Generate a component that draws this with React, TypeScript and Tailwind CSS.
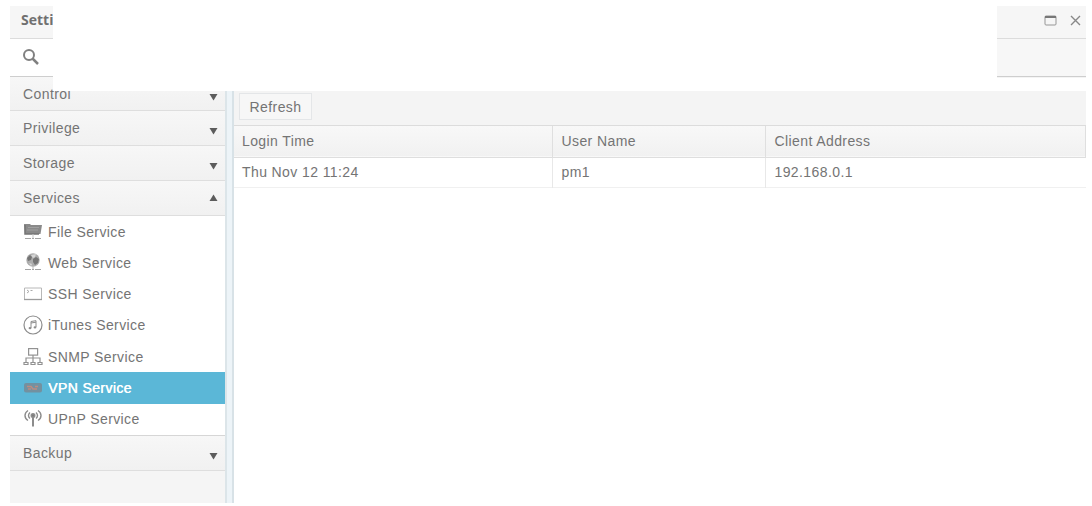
import type { ReactNode } from "react";
import clsx from "clsx";

type Service = {
  name: string;
  icon: ReactNode;
  active?: boolean;
};

const services: Service[] = [
  { name: "File Service", icon: <FileIcon /> },
  { name: "Web Service", icon: <WebIcon /> },
  { name: "SSH Service", icon: <SshIcon /> },
  { name: "iTunes Service", icon: <ItunesIcon /> },
  { name: "SNMP Service", icon: <SnmpIcon /> },
  { name: "VPN Service", icon: <VpnIcon />, active: true },
  { name: "UPnP Service", icon: <UpnpIcon /> },
];

const sessions = [{ time: "Thu Nov 12 11:24", user: "pm1", address: "192.168.0.1" }];

function FileIcon() {
  return (
    <svg width="20" height="20" viewBox="0 0 20 20">
      <path d="M1 2h6l1 1h11l-1.500 9H2z" fill="#8a8a8a" />
      <path d="M5 5.500h11M4 8h11" stroke="#a0a0a0" strokeWidth="1" />
      <path d="M2 3v9h14" stroke="#747474" strokeWidth="1.500" fill="none" />
      <path d="M10 12v4" stroke="#c8c8c8" />
      <path d="M2 16.500h16" stroke="#a4a4a4" strokeWidth="1.200" strokeDasharray="6 1 2 1" />
    </svg>
  );
}

function WebIcon() {
  return (
    <svg width="20" height="20" viewBox="0 0 20 20">
      <circle cx="10" cy="7" r="6.700" fill="#acacac" />
      <path d="M4 5l3-3 2 2-1 3-3 1zM10 6l3-2 3 2-1 4-3 2-2-3z" fill="#747474" />
      <path d="M8 2l5-1-1 3-2 1zM6 10l3 1-1 2z" fill="#d5d5d5" />
      <path d="M10 13v3" stroke="#bbb" />
      <path d="M2 16.500h16" stroke="#a4a4a4" strokeWidth="1.200" strokeDasharray="6 1 2 1" />
    </svg>
  );
}

function SshIcon() {
  return (
    <svg width="20" height="20" viewBox="0 0 20 20" fill="none">
      <path d="M1.500 15V4h17v11" stroke="#b8b8b8" />
      <path d="M1 15.500h18" stroke="#9c9c9c" strokeWidth="1.300" />
      <path d="M4 6l2 1.500L4 9M7.500 6.500h2" stroke="#aaa" />
    </svg>
  );
}

function ItunesIcon() {
  return (
    <svg width="20" height="20" viewBox="0 0 20 20" fill="none">
      <circle cx="10" cy="10" r="9" stroke="#8c8c8c" strokeWidth="1.200" />
      <path d="M8 13V6.500l5-.8V12M8 8l5-.8" stroke="#8c8c8c" />
      <ellipse cx="7" cy="13.200" rx="1.400" ry="1.100" fill="#8c8c8c" />
      <ellipse cx="12" cy="12.400" rx="1.400" ry="1.100" fill="#8c8c8c" />
    </svg>
  );
}

function SnmpIcon() {
  return (
    <svg width="20" height="20" viewBox="0 0 20 20" fill="none" stroke="#929292" strokeWidth="1.200">
      <rect x="5.600" y="1.600" width="9" height="6.500" />
      <path d="M10 8v7M3 15v-4h14v4" />
      <path d="M1 15.500h4v2H1zM8 15.500h4v2H8zM15 15.500h4v2h-4z" />
    </svg>
  );
}

function VpnIcon() {
  return (
    <svg width="20" height="20" viewBox="0 0 20 20">
      <rect x="1" y="5" width="18" height="9.500" rx="2" fill="#7391a0" />
      <path d="M4 8.500h4l2 2.500h4M5 11h3M12 8.500h3" stroke="#bd8c80" strokeWidth="1.500" fill="none" />
    </svg>
  );
}

function UpnpIcon() {
  return (
    <svg width="20" height="20" viewBox="0 0 20 20" fill="none" stroke="#8c8c8c" strokeWidth="1.400">
      <path d="M5 1.500c-4 2.500-4 7.500 0 10M15 1.500c4 2.500 4 7.500 0 10" />
      <path d="M7 3.500c-2 1.800-2 4.500 0 6M13 3.500c2 1.800 2 4.500 0 6" />
      <circle cx="10" cy="6.500" r="1.800" fill="#7c7c7c" />
      <path d="M10 8v9.500" strokeWidth="2" />
    </svg>
  );
}

function Section({ title, open = false, className }: { title: string; open?: boolean; className?: string }) {
  return (
    <div
      className={clsx(
        "flex shrink-0 items-center justify-between border-b border-[#dedede] bg-linear-to-b from-[#f7f7f7] to-[#f1f1f1] pr-[7px] pl-[13px]",
        className ?? "h-[35px]",
      )}
    >
      <span>{title}</span>
      <svg width="9" height="8" viewBox="0 0 9 8" className={open ? "rotate-180" : "mt-1.5"}>
        <path d="M.5 1h8L4.500 7.500z" fill="#5c5c5c" />
      </svg>
    </div>
  );
}

export default function App() {
  return (
    <div className="relative h-[506px] w-[1092px] overflow-hidden bg-white pt-1.5 pl-2.5 font-['Liberation_Sans',Arial,sans-serif] text-[14px] leading-5 tracking-[0.4px] text-[#747474]">
      <div className="flex h-[497px] w-[1076px] flex-col">
        {/* title bar */}
        <div className="flex h-[33px] shrink-0 items-center justify-between border-b border-[#dcdcdc] bg-[#f6f6f6] pr-[5px] pl-[11px]">
          <span className="pb-1 font-['Open_Sans','Noto_Sans',sans-serif] font-bold tracking-normal text-[#707070]">
            Settings
          </span>
          <div className="flex items-center gap-[13px] pb-1">
            <svg width="13" height="11" viewBox="0 0 13 11" fill="none">
              <rect x="1" y="1" width="11" height="9" rx="1" stroke="#969696" />
              <path d="M1 2h11" stroke="#777" strokeWidth="2" />
            </svg>
            <svg width="11" height="11" viewBox="0 0 11 11">
              <path d="M1 1l9 9M10 1l-9 9" stroke="#888" strokeWidth="1.400" />
            </svg>
          </div>
        </div>

        {/* search bar */}
        <div className="flex h-[38px] shrink-0 justify-between border-b border-[#cecece]">
          <svg width="18" height="18" viewBox="0 0 18 18" fill="none" className="mt-[9px] ml-3">
            <circle cx="7" cy="7" r="5" stroke="#808080" strokeWidth="2" />
            <path d="M10.500 10.500l5.500 5.500" stroke="#808080" strokeWidth="2.500" />
          </svg>
          <div className="w-[89px] bg-[#f7f7f7]" />
        </div>

        <div className="flex min-h-0 flex-1">
          <nav className="flex w-[215px] shrink-0 flex-col bg-[#f5f5f5]">
            <Section title="Control" className="h-[34px]" />
            <Section title="Privilege" />
            <Section title="Storage" />
            <Section title="Services" open />
            <ul className="flex h-[220px] shrink-0 flex-col border-b border-[#d6d6d6] bg-white">
              {services.map((service) => (
                <li
                  key={service.name}
                  className={clsx(
                    "flex flex-1 items-center gap-[5px] pl-[13px]",
                    service.active && "bg-[#5bb7d7] text-white [text-shadow:0.4px_0_#fff]",
                  )}
                >
                  {service.icon}
                  <span>{service.name}</span>
                </li>
              ))}
            </ul>
            <Section title="Backup" />
          </nav>

          {/* splitter */}
          <div className="w-[9px] shrink-0 border-r-2 border-l-2 border-r-[#d8e2e7] border-l-[#dce5e9] bg-[#edf4f8]" />

          <main className="min-w-0 flex-1">
            <div className="flex h-[49px] items-end border-b border-[#dcdcdc] bg-[#f4f4f4] pb-[5px] pl-[5px]">
              <button
                type="button"
                className="h-[27px] w-[73px] border border-[#e4e6e8] bg-[#f7f7f7] text-center"
              >
                Refresh
              </button>
            </div>
            <table className="w-full table-fixed border-collapse text-left">
              <colgroup>
                <col className="w-[318px]" />
                <col className="w-[213px]" />
                <col />
              </colgroup>
              <thead>
                <tr className="h-[31px] border-b border-[#dedede] bg-linear-to-b from-[#f8f8f8] to-[#f1f1f1]">
                  <th className="border-r border-[#dfdfdf] pl-2 font-normal">Login Time</th>
                  <th className="border-r border-[#dfdfdf] pl-[9px] font-normal">User Name</th>
                  <th className="border-r border-[#dfdfdf] pl-[9px] font-normal">Client Address</th>
                </tr>
              </thead>
              <tbody>
                {sessions.map((session) => (
                  <tr key={session.time} className="h-[30px] border-b border-[#f0f0f0]">
                    <td className="border-r border-[#e8e8e8] pl-2">{session.time}</td>
                    <td className="border-r border-[#e8e8e8] pl-[9px]">{session.user}</td>
                    <td className="pl-[9px]">{session.address}</td>
                  </tr>
                ))}
              </tbody>
            </table>
          </main>
        </div>
      </div>

      {/* blank cover over the top of the window */}
      <div className="absolute top-0 left-[53px] h-[91px] w-[944px] bg-white" />
      <div className="absolute top-[78px] right-0 h-[13px] w-[95px] bg-white" />
    </div>
  );
}
